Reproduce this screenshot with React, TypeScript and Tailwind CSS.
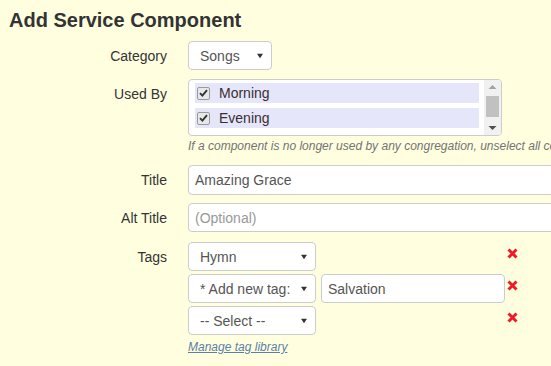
import React from "react";

const font = { fontFamily: '"Liberation Sans", Arial, Helvetica, sans-serif' };

function Arrow() {
  return (
    <svg width="8" height="6" viewBox="0 0 8 6" className="absolute right-[7px] top-1/2 -translate-y-1/2">
      <path d="M1 0.8 L7 0.8 L4 5.2 Z" fill="#333" />
    </svg>
  );
}

function Select({ text, w }: { text: string; w: string }) {
  return (
    <div
      className={`relative ${w} h-[29px] shrink-0 bg-white border border-[#cccccc] rounded-[4px] flex items-center pl-[11px] text-[14px] text-[#555]`}
    >
      <span>{text}</span>
      <Arrow />
    </div>
  );
}

function RedX() {
  return (
    <svg width="11" height="11" viewBox="0 0 11 11" className="shrink-0 -mt-[7px]">
      <path d="M1.5 1.5 L9.5 9.5 M9.5 1.5 L1.5 9.5" stroke="#ee1b24" strokeWidth="3" strokeLinecap="butt" />
    </svg>
  );
}

function Check() {
  return (
    <div className="w-[13px] h-[13px] border border-[#9a9a9a] rounded-[2px] bg-[#e8e8e8] flex items-center justify-center shrink-0">
      <svg width="9" height="8" viewBox="0 0 9 8">
        <path d="M1 4.2 L3.4 6.6 L8 1.2" stroke="#333" strokeWidth="1.9" fill="none" />
      </svg>
    </div>
  );
}

function Row({ label }: { label: string }) {
  return (
    <div className="h-[20px] bg-[#e6e6fa] flex items-center pl-[2px]">
      <Check />
      <span className="ml-[9px] text-[14px] text-[#3a2e30]">{label}</span>
    </div>
  );
}

export default function App() {
  return (
    <div className="w-full h-[366px] overflow-hidden bg-[#ffffe0] text-[#333]" style={font}>
      <h2 className="pt-[9px] pl-[9px] text-[20px] leading-[22px] font-bold text-[#333]">Add Service Component</h2>

      <div className="grid grid-cols-[167px_1fr] gap-x-[21px] mt-[10px] text-[14px] leading-[20px]">
        {/* Category */}
        <div className="h-[29px] flex items-center justify-end">Category</div>
        <div>
          <Select text="Songs" w="w-[84px]" />
        </div>

        {/* Used By */}
        <div className="mt-[9px] pt-[5px] text-right">Used By</div>
        <div className="mt-[9px]">
          <div className="w-[314px] h-[57px] bg-white border border-[#cccccc] rounded-[4px] flex overflow-hidden">
            <div className="flex-1 pl-[6px] pt-[3px] flex flex-col gap-[5px]">
              <Row label="Morning" />
              <Row label="Evening" />
            </div>
            <div className="w-[17px] ml-[5px] bg-[#f1f1f1] flex flex-col items-center">
              <svg width="9" height="6" viewBox="0 0 9 6" className="mt-[4px]">
                <path d="M0.5 5 L8.5 5 L4.5 1 Z" fill="#a3a3a3" />
              </svg>
              <div className="w-[13px] h-[21px] bg-[#c1c1c1] mt-[6px]" />
              <svg width="9" height="6" viewBox="0 0 9 6" className="mt-[8px]">
                <path d="M0.5 1 L8.5 1 L4.5 5 Z" fill="#505050" />
              </svg>
            </div>
          </div>
          <div className="mt-[2px] text-[12px] leading-[17px] italic text-[#737373] whitespace-nowrap">
            If a component is no longer used by any congregation, unselect all congregations.
          </div>
        </div>

        {/* Title */}
        <div className="mt-[10px] h-[30px] flex items-center justify-end">Title</div>
        <div className="mt-[10px]">
          <div className="w-[400px] h-[30px] bg-white border border-[#cccccc] rounded-[4px] flex items-center pl-[6px] text-[#555]">
            Amazing Grace
          </div>
        </div>

        {/* Alt Title */}
        <div className="mt-[8px] h-[29px] flex items-center justify-end">Alt Title</div>
        <div className="mt-[8px]">
          <div className="w-[400px] h-[29px] bg-white border border-[#cccccc] rounded-[4px] flex items-center pl-[6px] text-[#999]">
            (Optional)
          </div>
        </div>

        {/* Tags */}
        <div className="mt-[10px] h-[29px] flex items-center justify-end">Tags</div>
        <div className="mt-[10px] flex flex-col gap-[3px]">
          <div className="flex items-center">
            <Select text="Hymn" w="w-[128px]" />
            <div className="w-[184px] ml-[5px] shrink-0" />
            <div className="ml-[2px] flex items-center h-[29px]">
              <RedX />
            </div>
          </div>
          <div className="flex items-center">
            <Select text="* Add new tag:" w="w-[128px]" />
            <div className="w-[184px] h-[29px] ml-[5px] shrink-0 bg-white border border-[#cccccc] rounded-[4px] flex items-center pl-[6px] text-[#555]">
              Salvation
            </div>
            <div className="ml-[2px] flex items-center h-[29px]">
              <RedX />
            </div>
          </div>
          <div className="flex items-center">
            <Select text="-- Select --" w="w-[128px]" />
            <div className="w-[184px] ml-[5px] shrink-0" />
            <div className="ml-[2px] flex items-center h-[29px]">
              <RedX />
            </div>
          </div>
          <div className="mt-[1px] text-[12px] leading-[17px] italic underline text-[#5b7fa6]">Manage tag library</div>
        </div>
      </div>
    </div>
  );
}
